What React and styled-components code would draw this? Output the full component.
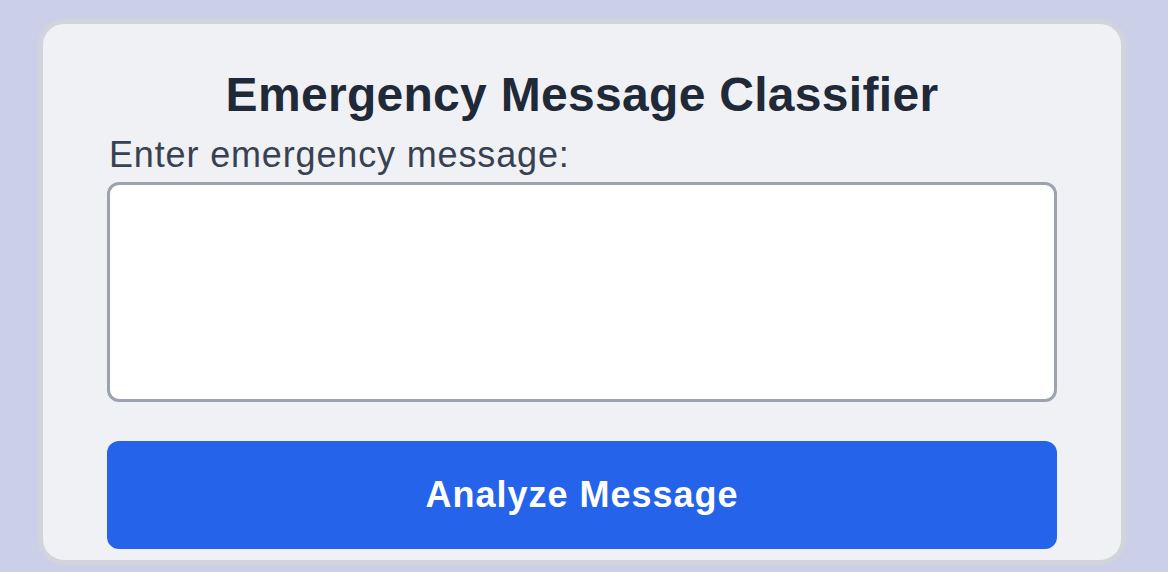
import styled, { createGlobalStyle } from "styled-components";

const GlobalStyle = createGlobalStyle`
  html, body {
    margin: 0;
    padding: 0;
    background-color: #cbcfe8;
    font-family: "Liberation Sans", Arial, sans-serif;
  }
`;

const Page = styled.main`
  min-height: 572px;
  padding: 19px 42px 0 38px;
  box-sizing: border-box;
`;

const Card = styled.section`
  background-color: #eff1f5;
  border: 5px solid #d1d5db;
  border-radius: 26px;
  padding: 43px 64px 11px;
  box-sizing: border-box;
  width: 1088px;
  display: flex;
  flex-direction: column;
`;

const Title = styled.h1`
  margin: 0 0 12px;
  font-size: 48px;
  font-weight: 700;
  line-height: 55px;
  letter-spacing: 0.3px;
  color: #1f2937;
  text-align: center;
`;

const Label = styled.label`
  display: block;
  font-size: 36px;
  line-height: 41px;
  letter-spacing: 0.85px;
  padding-left: 2px;
  color: #374151;
  margin-bottom: 7px;
`;

const MessageInput = styled.textarea`
  display: block;
  width: 100%;
  height: 220px;
  box-sizing: border-box;
  border: 3px solid #9ca3af;
  border-radius: 12px;
  background-color: #fff;
  resize: none;
  padding: 12px;
  font-family: inherit;
  font-size: 32px;
  outline: none;
`;

const AnalyzeButton = styled.button`
  margin-top: 39px;
  width: 100%;
  height: 108px;
  border: none;
  border-radius: 12px;
  background-color: #2563eb;
  color: #fff;
  font-family: inherit;
  font-size: 36px;
  font-weight: 700;
  letter-spacing: 1px;
  cursor: pointer;

  &:hover {
    background-color: #1d4ed8;
  }
`;

export default function App() {
  return (
    <>
      <GlobalStyle />
      <Page>
        <Card>
          <Title>Emergency Message Classifier</Title>
          <Label htmlFor="message">Enter emergency message:</Label>
          <MessageInput id="message" />
          <AnalyzeButton>Analyze Message</AnalyzeButton>
        </Card>
      </Page>
    </>
  );
}
